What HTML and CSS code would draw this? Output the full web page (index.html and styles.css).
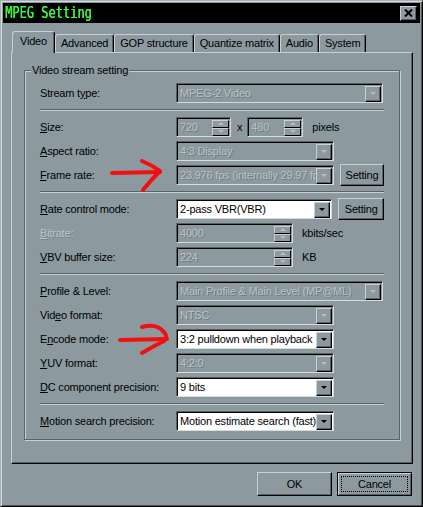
FILE: index.html
```html
<!DOCTYPE html>
<html lang="en">
<head>
  <meta charset="UTF-8" />
  <title>MPEG Setting</title>
  <link rel="stylesheet" href="styles.css">
</head>
<body>
  <div class="window">
    <div class="titlebar">
      <span class="title">MPEG Setting</span>
      <span class="closeBtn">
        <svg width="9" height="8" viewBox="0 0 9 8"><path d="M1 0.5 L8 7.5 M8 0.5 L1 7.5" stroke="#000" stroke-width="2"/></svg>
      </span>
    </div>

    <div class="tabs">
      <div class="tab active">Video</div>
      <div class="tab">Advanced</div>
      <div class="tab">GOP structure</div>
      <div class="tab">Quantize matrix</div>
      <div class="tab">Audio</div>
      <div class="tab">System</div>
    </div>

    <div class="panel">
      <div class="group">
        <div class="legend">Video stream setting</div>

        <div class="row">
          <span class="lbl">Stream t<u>y</u>pe:</span>
          <div class="combo off wide"><span class="val">MPEG-2 Video</span><span class="drop"></span></div>
        </div>

        <div class="sep"></div>

        <div class="row">
          <span class="lbl"><u>S</u>ize:</span>
          <div class="spin off sizeSpin"><span class="val">720</span><span class="spinBtns"><i class="up"></i><i class="down"></i></span></div>
          <span class="times">x</span>
          <div class="spin off sizeSpin2"><span class="val">480</span><span class="spinBtns"><i class="up"></i><i class="down"></i></span></div>
          <span class="unit">pixels</span>
        </div>
        <div class="row">
          <span class="lbl"><u>A</u>spect ratio:</span>
          <div class="combo off"><span class="val">4:3 Display</span><span class="drop"></span></div>
        </div>
        <div class="row">
          <span class="lbl"><u>F</u>rame rate:</span>
          <div class="combo off"><span class="val">23.976 fps (internally 29.97 fps)</span><span class="drop"></span></div>
          <span class="btn settingBtn">Setting</span>
        </div>

        <div class="sep"></div>

        <div class="row">
          <span class="lbl"><u>R</u>ate control mode:</span>
          <div class="combo"><span class="val">2-pass VBR(VBR)</span><span class="drop"></span></div>
          <span class="btn settingBtn">Setting</span>
        </div>
        <div class="row">
          <span class="lbl dim"><u>B</u>itrate:</span>
          <div class="spin off rateSpin"><span class="val">4000</span><span class="spinBtns"><i class="up"></i><i class="down"></i></span></div>
          <span class="unit">kbits/sec</span>
        </div>
        <div class="row">
          <span class="lbl"><u>V</u>BV buffer size:</span>
          <div class="spin off rateSpin"><span class="val">224</span><span class="spinBtns"><i class="up"></i><i class="down"></i></span></div>
          <span class="unit">KB</span>
        </div>

        <div class="sep"></div>

        <div class="row">
          <span class="lbl"><u>P</u>rofile &amp; Level:</span>
          <div class="combo off wide"><span class="val">Main Profile &amp; Main Level (MP@ML)</span><span class="drop"></span></div>
        </div>
        <div class="row">
          <span class="lbl">Vid<u>e</u>o format:</span>
          <div class="combo off"><span class="val">NTSC</span><span class="drop"></span></div>
        </div>
        <div class="row">
          <span class="lbl">E<u>n</u>code mode:</span>
          <div class="combo"><span class="val">3:2 pulldown when playback</span><span class="drop"></span></div>
        </div>
        <div class="row">
          <span class="lbl"><u>Y</u>UV format:</span>
          <div class="combo off"><span class="val">4:2:0</span><span class="drop"></span></div>
        </div>
        <div class="row">
          <span class="lbl"><u>D</u>C component precision:</span>
          <div class="combo"><span class="val">9 bits</span><span class="drop"></span></div>
        </div>

        <div class="sep"></div>

        <div class="row">
          <span class="lbl"><u>M</u>otion search precision:</span>
          <div class="combo"><span class="val">Motion estimate search (fast)</span><span class="drop"></span></div>
        </div>
      </div>
    </div>

    <div class="footer">
      <span class="btn bigBtn">OK</span>
      <span class="btn bigBtn defBtn">Cancel</span>
    </div>
  </div>

  <!-- hand drawn red arrows on top of the dialog -->
  <svg class="marks" width="423" height="507" viewBox="0 0 423 507">
    <g fill="none" stroke="#f01010" stroke-width="4" stroke-linecap="round" stroke-linejoin="round">
      <path d="M112 173 L160 172"/>
      <path d="M142 161 Q152 165 160 171 Q151 180 143 190"/>
      <path d="M120 340 L167 339"/>
      <path d="M142 327 Q156 323 163 331 Q169 337 164 341 Q152 347 142 353"/>
    </g>
  </svg>
</body>
</html>
```

FILE: styles.css
```css
* { box-sizing: border-box; }
body {
  margin: 0;
  background: #8c9aa0;
  font-family: 'Liberation Sans', Arial, sans-serif;
  font-size: 11px;
  letter-spacing: -0.2px;
  color: #000;
}
u { text-decoration: underline; text-underline-offset: 1px; }

.window {
  position: relative;
  width: 423px;
  height: 507px;
  background: #8c9aa0;
  border: 1px solid;
  border-color: #a4b1b6 #000 #000 #a4b1b6;
  box-shadow: inset 1px 1px #d3dbde, inset -1px -1px #4e585c;
  padding: 2px;
}

.titlebar {
  height: 20px;
  background: #000;
  display: flex;
  align-items: center;
  justify-content: space-between;
}
.title {
  display: inline-block;
  color: #3cf53c;
  font-family: 'DejaVu Sans Mono', monospace;
  font-size: 12px;
  letter-spacing: 0;
  padding-left: 2px;
  transform: scaleY(1.3);
  transform-origin: left center;
  text-shadow: 0.4px 0 0 #3cf53c;
}
.closeBtn {
  width: 17px;
  height: 15px;
  margin-right: 3px;
  background: #8c9aa0;
  border: 1px solid;
  border-color: #c8d0d4 #000 #000 #c8d0d4;
  box-shadow: inset -1px -1px #5a6468;
  display: flex;
  align-items: center;
  justify-content: center;
}

.tabs {
  position: relative;
  z-index: 1;
  display: flex;
  align-items: flex-end;
  height: 21px;
  margin: 8px 0 0 9px;
}
.tab {
  height: 18px;
  padding: 0 5px;
  line-height: 16px;
  border: 1px solid;
  border-bottom: none;
  border-color: #c8d0d4 #000 transparent #c8d0d4;
  border-radius: 3px 3px 0 0;
  box-shadow: inset -1px 0 #5a6468;
  background: #8c9aa0;
}
.tab.active {
  height: 22px;
  margin-bottom: -1px;
  padding: 0 7px;
  line-height: 18px;
}

.panel {
  width: 402px;
  height: 412px;
  margin-left: 8px;
  border: 1px solid;
  border-color: #c8d0d4 #000 #000 #c8d0d4;
  box-shadow: inset -1px -1px #5a6468;
  padding: 17px 0 0 12px;
}

.group {
  position: relative;
  width: 376px;
  height: 370px;
  border: 1px solid #5a6468;
  box-shadow: inset 1px 1px #c8d0d4, 1px 1px #c8d0d4;
  padding: 12px 15px 0 15px;
}
.legend {
  position: absolute;
  top: -8px;
  left: 6px;
  padding: 0 1px;
  background: #8c9aa0;
  line-height: 14px;
}

.row {
  display: flex;
  align-items: center;
  height: 20px;
}
.row + .row { margin-top: 4px; }
.sep {
  height: 2px;
  border-top: 1px solid #5a6468;
  border-bottom: 1px solid #c8d0d4;
  margin: 6px 0;
}
.lbl { width: 136px; flex-shrink: 0; }
.dim { color: #bcc6ca; text-shadow: 1px 1px 0 #77848a; }

.combo, .spin {
  display: flex;
  align-items: center;
  width: 158px;
  height: 20px;
  border: 1px solid;
  border-color: #56605f #d4dcdf #d4dcdf #56605f;
  box-shadow: inset 1px 1px #000;
  background: #fff;
  padding-left: 3px;
}
.combo.wide { width: 207px; }
.off { background: #8c9aa0; }
.val {
  flex: 1;
  white-space: nowrap;
  overflow: hidden;
  line-height: 16px;
}
.off .val { color: #b8c3c7; text-shadow: 1px 1px 0 rgba(80, 92, 98, 0.55); }

.drop {
  position: relative;
  width: 16px;
  height: 16px;
  margin: 1px 1px 0 0;
  background: #8c9aa0;
  border: 1px solid;
  border-color: #c8d0d4 #000 #000 #c8d0d4;
  box-shadow: inset -1px -1px #5a6468;
  display: flex;
  align-items: center;
  justify-content: center;
}
.drop::after {
  content: '';
  border-top: 3px solid #000;
  border-left: 3px solid transparent;
  border-right: 3px solid transparent;
}
.off .drop::after { border-top-color: #b6c0c4; }

.spinBtns {
  display: flex;
  flex-direction: column;
  width: 17px;
  height: 16px;
  margin: 1px 1px 0 0;
}
.spinBtns i {
  flex: 1;
  display: flex;
  align-items: center;
  justify-content: center;
  background: #8c9aa0;
  border: 1px solid;
  border-color: #c8d0d4 #000 #000 #c8d0d4;
}
.spinBtns .up::after {
  content: '';
  border-bottom: 3px solid #b6c0c4;
  border-left: 3px solid transparent;
  border-right: 3px solid transparent;
}
.spinBtns .down::after {
  content: '';
  border-top: 3px solid #b6c0c4;
  border-left: 3px solid transparent;
  border-right: 3px solid transparent;
}
.sizeSpin { width: 55px; }
.sizeSpin2 { width: 56px; }
.rateSpin { width: 117px; }
.times { margin: 0 5px 0 6px; }
.unit { margin-left: 9px; }

.btn {
  display: flex;
  align-items: center;
  justify-content: center;
  background: #8c9aa0;
  border: 1px solid;
  border-color: #c8d0d4 #000 #000 #c8d0d4;
  box-shadow: inset -1px -1px #5a6468;
}
.settingBtn {
  width: 46px;
  height: 22px;
  margin: -1px 0 -1px 6px;
}

.footer {
  display: flex;
  justify-content: flex-end;
  gap: 5px;
  margin: 8px 8px 0 0;
}
.bigBtn {
  width: 75px;
  height: 24px;
}
.defBtn {
  border-color: #000;
  box-shadow: inset 1px 1px #c8d0d4, inset -1px -1px #5a6468;
  outline: 1px dotted #000;
  outline-offset: -5px;
}

.marks {
  position: absolute;
  left: 0;
  top: 0;
  pointer-events: none;
}
```
